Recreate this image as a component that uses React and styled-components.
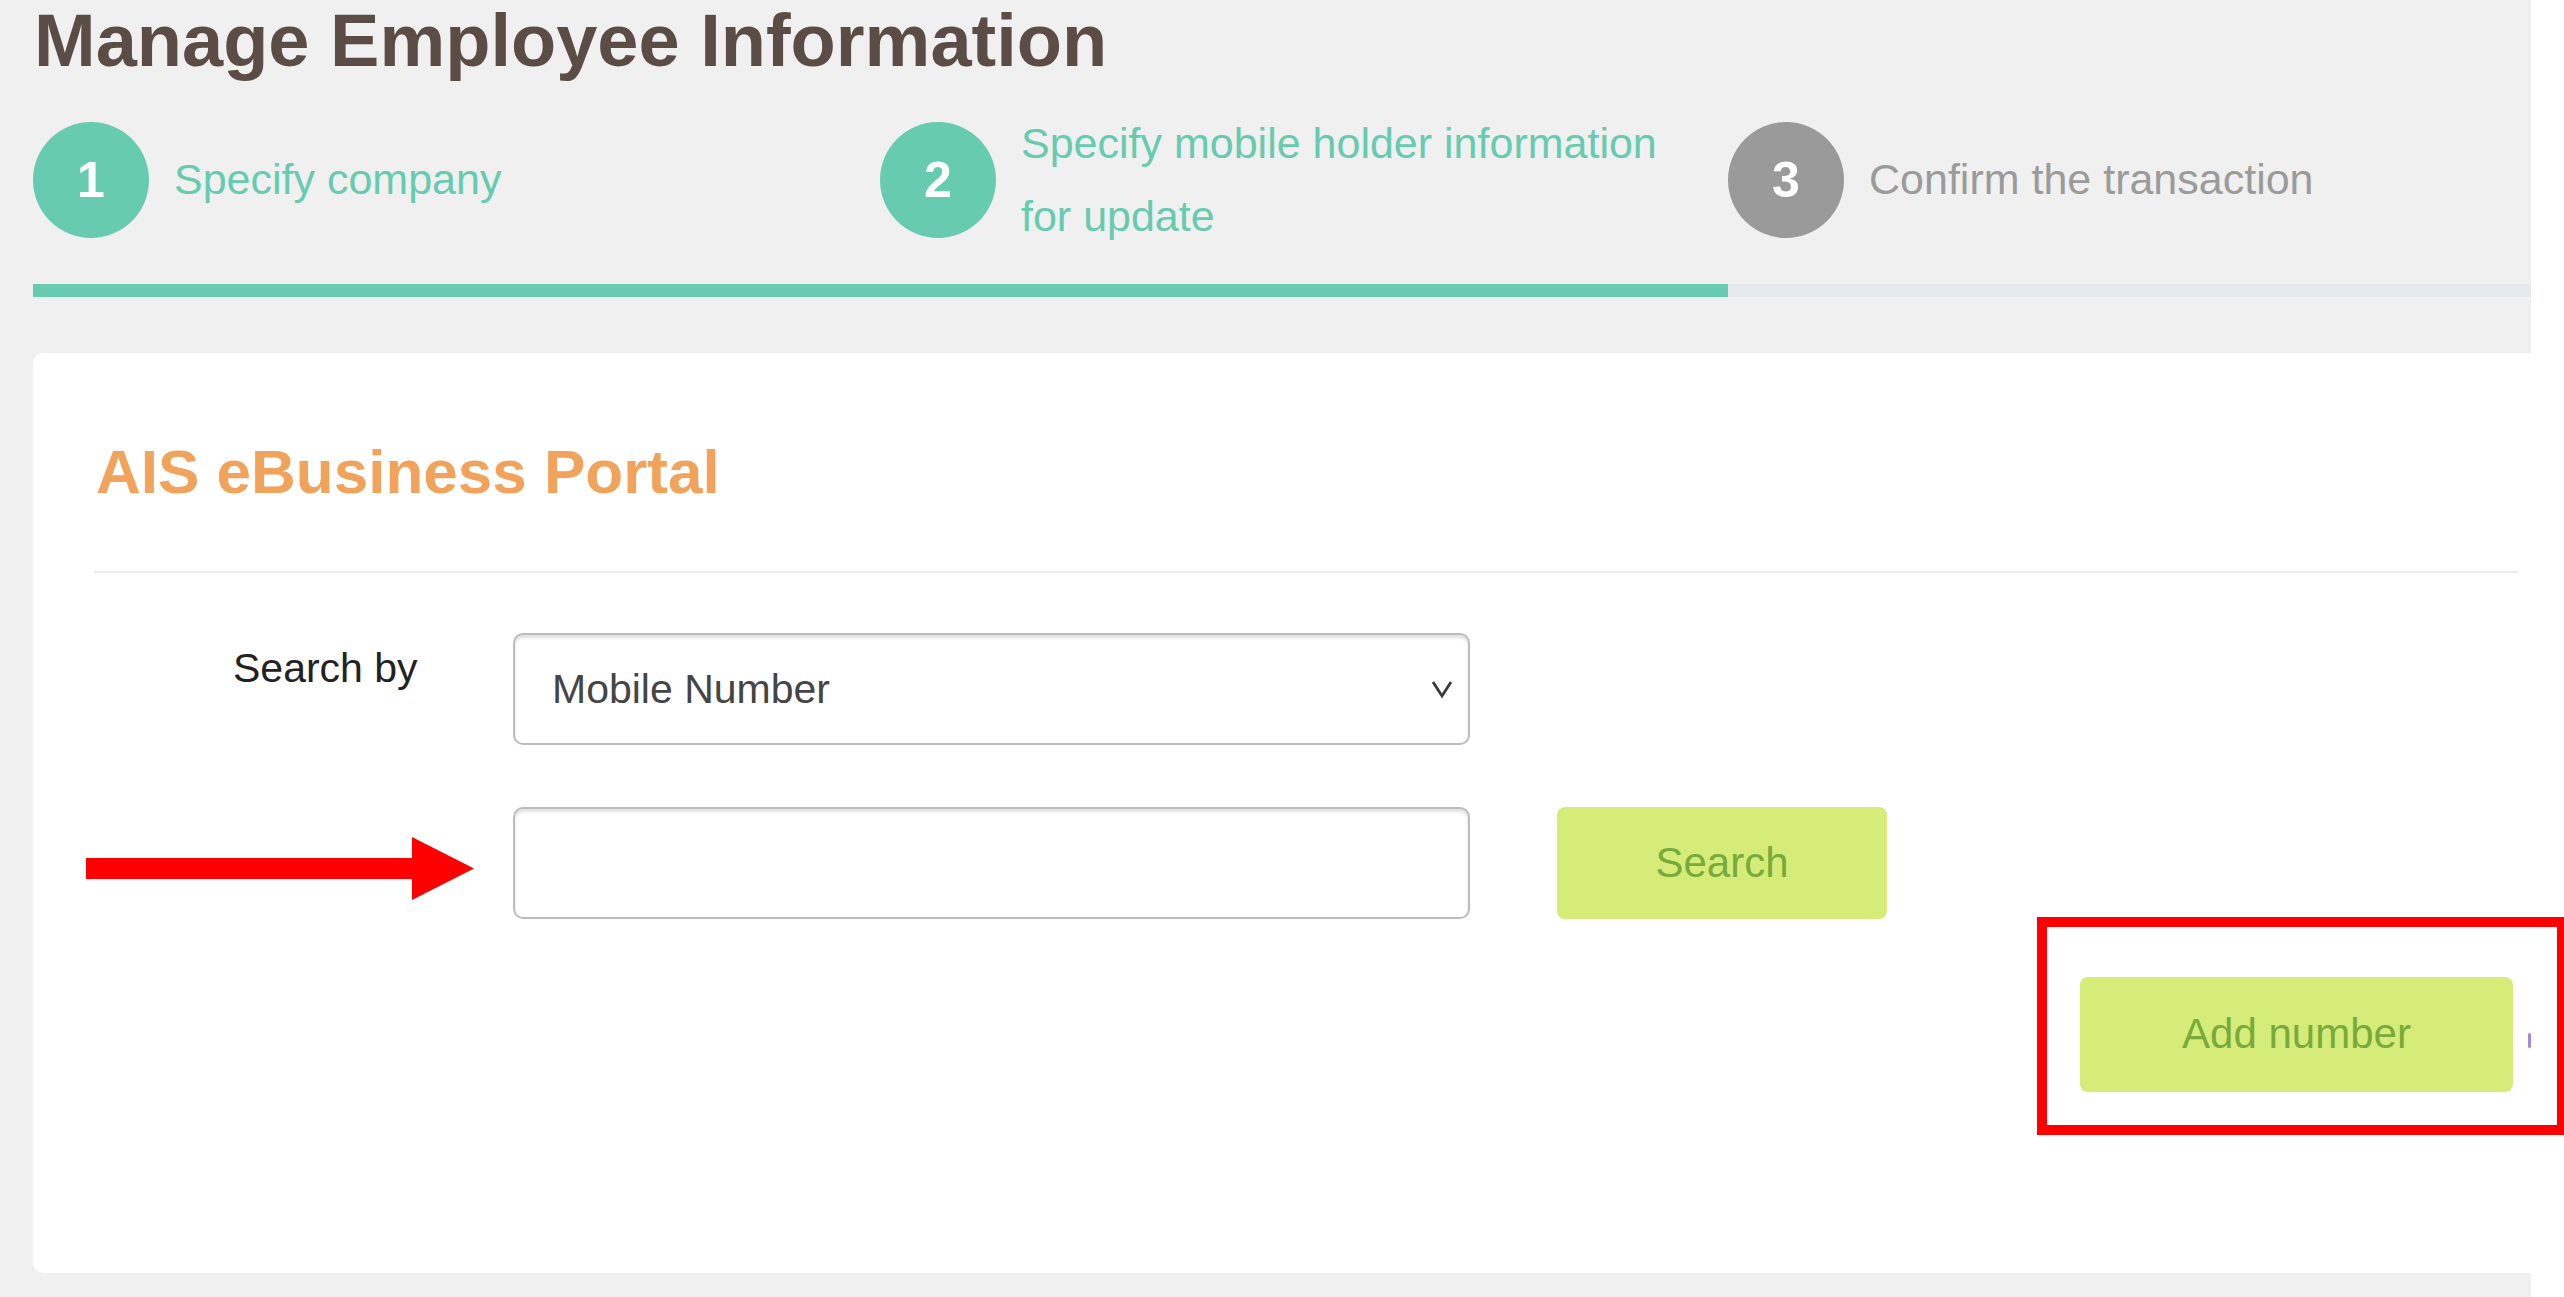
import React from 'react';
import styled, { createGlobalStyle } from 'styled-components';

const steps = [
  { no: 1, label: 'Specify company', state: 'done' },
  { no: 2, label: 'Specify mobile holder information for update', state: 'done' },
  { no: 3, label: 'Confirm the transaction', state: 'todo' },
];

const App = () => {
  return (
    <Page>
      <GlobalStyle />
      <Main>
        <Heading>Manage Employee Information</Heading>
        <Steps>
          {steps.map((s) => (
            <Step key={s.no}>
              <Circle $active={s.state === 'done'}>{s.no}</Circle>
              <StepLabel $active={s.state === 'done'}>{s.label}</StepLabel>
            </Step>
          ))}
        </Steps>
        <Track>
          <Fill $width={1695} />
        </Track>
        <Card>
          <CardTitle>AIS eBusiness Portal</CardTitle>
          <Divider />
          <Form>
            <Label>Search by</Label>
            <SelectWrap>
              <Select defaultValue="mobile">
                <option value="mobile">Mobile Number</option>
              </Select>
              <Chevron width="24" height="20" viewBox="0 0 24 20">
                <polyline points="3,3 12,17 21,3" fill="none" stroke="#3a3a3a" strokeWidth="2.8" />
              </Chevron>
            </SelectWrap>
            <Input type="text" />
            <Button>Search</Button>
          </Form>
          <Actions>
            <Button $wide>Add number</Button>
          </Actions>
        </Card>
      </Main>

      {/* annotations drawn over the screenshot */}
      <Arrow width="388" height="63" viewBox="0 0 388 63">
        <rect x="0" y="21" width="327" height="21" fill="#ff0000" />
        <polygon points="326,0 388,31.5 326,63" fill="#ff0000" />
      </Arrow>
      <Highlight />
      <Tick />
    </Page>
  );
};

const GlobalStyle = createGlobalStyle`
  html, body {
    margin: 0;
    padding: 0;
    background: #fff;
    overflow: hidden;
  }
  * {
    box-sizing: border-box;
  }
`;

const Page = styled.div`
  position: relative;
  width: 2564px;
  height: 1297px;
  overflow: hidden;
  background: #fff;
  font-family: 'Liberation Sans', Arial, Helvetica, sans-serif;
`;

const Main = styled.div`
  width: 2531px;
  height: 1297px;
  padding-left: 33px;
  background: #f0f0f0;
`;

const Heading = styled.h1`
  margin: 0 0 0 1px;
  font-size: 74px;
  line-height: 1.12;
  font-weight: bold;
  color: #5b4c46;
`;

const Steps = styled.div`
  display: grid;
  grid-template-columns: 847px 848px 1fr;
  height: 146px;
  margin-top: 24px;
`;

const Step = styled.div`
  display: flex;
  align-items: center;
  gap: 25px;
`;

const Circle = styled.div`
  flex: none;
  width: 116px;
  height: 116px;
  border-radius: 50%;
  display: flex;
  align-items: center;
  justify-content: center;
  background: ${(p) => (p.$active ? '#67cbb0' : '#9a9a9a')};
  color: #fff;
  font-size: 50px;
  font-weight: bold;
`;

const StepLabel = styled.div`
  max-width: 680px;
  font-size: 43px;
  line-height: 73px;
  color: ${(p) => (p.$active ? '#66cbaf' : '#9b9b9b')};
`;

const Track = styled.div`
  height: 13px;
  margin-top: 31px;
  background: #e6e9ed;
`;

const Fill = styled.div`
  width: ${(p) => p.$width}px;
  height: 100%;
  background: #67cbb0;
`;

const Card = styled.div`
  margin-top: 56px;
  margin-right: -33px;
  padding: 88px 46px 181px 61px;
  background: #fff;
  border-radius: 10px;
`;

const CardTitle = styled.h2`
  margin: 0 0 0 2px;
  font-size: 62px;
  line-height: 1;
  font-weight: bold;
  color: #f1a35c;
`;

const Divider = styled.div`
  height: 2px;
  margin-top: 68px;
  background: #ebebeb;
`;

const Form = styled.div`
  display: grid;
  grid-template-columns: 332px 957px 330px;
  grid-auto-rows: 112px;
  column-gap: 87px;
  row-gap: 62px;
  margin-top: 60px;
`;

const Label = styled.label`
  padding: 15px 0 0 139px;
  font-size: 41px;
  line-height: 1;
  color: #222;
  white-space: nowrap;
`;

const SelectWrap = styled.div`
  position: relative;
  grid-column: 2;
`;

const fieldBox = `
  width: 100%;
  height: 100%;
  border: 2px solid #bcbcbc;
  border-radius: 10px;
  background: #fff;
  box-shadow: inset 0 3px 3px rgba(0, 0, 0, 0.12);
  font-family: 'Liberation Sans', Arial, Helvetica, sans-serif;
  font-size: 41px;
  color: #454545;
  outline: none;
`;

const Select = styled.select`
  ${fieldBox}
  appearance: none;
  padding: 0 60px 0 37px;
`;

const Chevron = styled.svg`
  position: absolute;
  right: 16px;
  top: 50%;
  margin-top: -10px;
  pointer-events: none;
`;

const Input = styled.input`
  ${fieldBox}
  grid-column: 2;
  padding: 0 37px;
`;

const Button = styled.button`
  width: ${(p) => (p.$wide ? '433px' : '330px')};
  height: ${(p) => (p.$wide ? '115px' : '112px')};
  border: none;
  border-radius: 8px;
  background: #d6ec79;
  color: #79aa3c;
  font-family: 'Liberation Sans', Arial, Helvetica, sans-serif;
  font-size: 42px;
  cursor: pointer;
`;

const Actions = styled.div`
  display: flex;
  justify-content: flex-end;
  margin-top: 58px;
  padding-right: 5px;
`;

const Arrow = styled.svg`
  position: absolute;
  left: 86px;
  top: 837px;
`;

const Highlight = styled.div`
  position: absolute;
  left: 2037px;
  top: 917px;
  width: 530px;
  height: 218px;
  border: 10px solid #ff0000;
`;

const Tick = styled.div`
  position: absolute;
  left: 2528px;
  top: 1033px;
  width: 3px;
  height: 15px;
  border-radius: 2px;
  background: #a58ad8;
`;

export default App;
